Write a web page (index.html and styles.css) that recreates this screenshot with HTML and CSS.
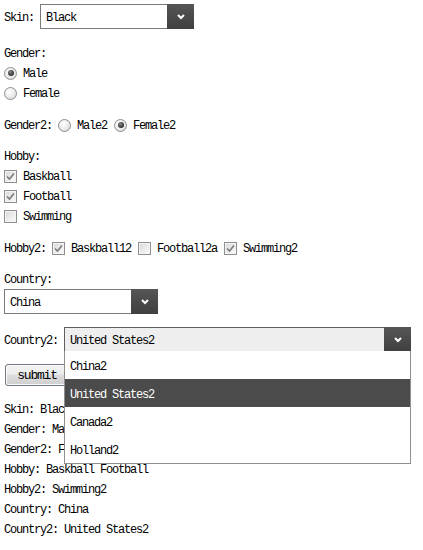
FILE: index.html
```html
<!DOCTYPE html>
<html>
<head>
<meta charset="utf-8">
<link rel="stylesheet" href="styles.css">
</head>
<body>
<form class="form">
  <div class="row row-skin">
    <span class="lbl">Skin:</span>
    <div class="select select-skin"><span class="val">Black</span><span class="arrow"><svg width="8" height="6" viewBox="0 0 8 6"><polyline points="1,1 4,4 7,1" fill="none" stroke="#fff" stroke-width="2"/></svg></span></div>
  </div>

  <div class="line mt14">Gender:</div>
  <div class="line"><span class="radio checked"></span><span class="txt">Male</span></div>
  <div class="line"><span class="radio"></span><span class="txt">Female</span></div>

  <div class="line mt12"><span class="lbl">Gender2:</span><span class="radio"></span><span class="txt item">Male2</span><span class="radio checked"></span><span class="txt">Female2</span></div>

  <div class="line mt11">Hobby:</div>
  <div class="line"><span class="check on"><svg width="11" height="11" viewBox="0 0 11 11"><polyline points="2,5.5 4.5,8 9,2.5" fill="none" stroke="#7a7a7a" stroke-width="1.6"/></svg></span><span class="txt">Baskball</span></div>
  <div class="line"><span class="check on"><svg width="11" height="11" viewBox="0 0 11 11"><polyline points="2,5.5 4.5,8 9,2.5" fill="none" stroke="#7a7a7a" stroke-width="1.6"/></svg></span><span class="txt">Football</span></div>
  <div class="line"><span class="check"></span><span class="txt">Swimming</span></div>

  <div class="line mt12"><span class="lbl">Hobby2:</span><span class="check on"><svg width="11" height="11" viewBox="0 0 11 11"><polyline points="2,5.5 4.5,8 9,2.5" fill="none" stroke="#7a7a7a" stroke-width="1.6"/></svg></span><span class="txt item">Baskball12</span><span class="check"></span><span class="txt item">Football2a</span><span class="check on"><svg width="11" height="11" viewBox="0 0 11 11"><polyline points="2,5.5 4.5,8 9,2.5" fill="none" stroke="#7a7a7a" stroke-width="1.6"/></svg></span><span class="txt">Swimming2</span></div>

  <div class="line mt11">Country:</div>
  <div class="row">
    <div class="select select-country"><span class="val">China</span><span class="arrow"><svg width="8" height="6" viewBox="0 0 8 6"><polyline points="1,1 4,4 7,1" fill="none" stroke="#fff" stroke-width="2"/></svg></span></div>
  </div>

  <div class="row mt13">
    <span class="lbl lbl-c2">Country2:</span>
    <div class="select select-country2 open"><span class="val">United States2</span><span class="arrow"><svg width="8" height="6" viewBox="0 0 8 6"><polyline points="1,1 4,4 7,1" fill="none" stroke="#fff" stroke-width="2"/></svg></span>
      <ul class="dropdown">
        <li class="opt">China2</li>
        <li class="opt selected">United States2</li>
        <li class="opt">Canada2</li>
        <li class="opt">Holland2</li>
      </ul>
    </div>
  </div>

  <button type="button" class="submit">submit</button>

  <div class="results">
    <div class="line">Skin: Black</div>
    <div class="line">Gender: Male</div>
    <div class="line">Gender2: Female2</div>
    <div class="line">Hobby: Baskball Football</div>
    <div class="line">Hobby2: Swimming2</div>
    <div class="line">Country: China</div>
    <div class="line">Country2: United States2</div>
  </div>
</form>
</body>
</html>
```

FILE: styles.css
```css
html, body {
  margin: 0;
  padding: 0;
  background: #fff;
}
body {
  font-family: "Liberation Mono", "DejaVu Sans Mono", monospace;
  font-size: 12px;
  letter-spacing: -1.2px;
  color: #000;
}
.form {
  padding: 4px 0 0 4px;
  margin: 0;
}
.row {
  display: flex;
  align-items: center;
  height: 25px;
}
.row .lbl { padding-top: 2px; }
.line {
  box-sizing: border-box;
  display: flex;
  align-items: center;
  height: 20px;
  padding-top: 2px;
  white-space: pre;
}
.mt11 { margin-top: 11px; }
.mt12 { margin-top: 12px; }
.mt13 { margin-top: 13px; }
.mt14 { margin-top: 14px; }

.lbl {
  margin-right: 6px;
  white-space: pre;
}
.txt { white-space: pre; }
.item { margin-right: 7px; }

/* radio */
.radio {
  box-sizing: border-box;
  width: 13px;
  height: 13px;
  border-radius: 50%;
  border: 1px solid #8e8e8e;
  background: radial-gradient(circle at 40% 35%, #ffffff 0%, #f0f0f0 40%, #d2d2d2 100%);
  margin: -2px 6px 0 0;
  position: relative;
  flex: none;
}
.radio.checked::after {
  content: "";
  position: absolute;
  left: 2.5px;
  top: 2.5px;
  width: 6px;
  height: 6px;
  border-radius: 50%;
  background: radial-gradient(circle at 40% 35%, #8a8a8a 0%, #3a3a3a 60%, #222 100%);
}

/* checkbox */
.check {
  box-sizing: border-box;
  width: 13px;
  height: 13px;
  border: 1px solid #8e8f8f;
  background: linear-gradient(135deg, #d8d8d8 0%, #ececec 55%, #fafafa 100%);
  box-shadow: inset 0 0 0 1px #f4f4f4;
  margin: -2px 6px 0 0;
  flex: none;
  display: flex;
  align-items: center;
  justify-content: center;
}
.check svg { display: block; }

/* selects */
.select {
  box-sizing: border-box;
  height: 25px;
  border: 1px solid #7b7b7b;
  background: #fff;
  display: flex;
  align-items: center;
  position: relative;
}
.select .val {
  flex: 1;
  padding: 2px 0 0 5px;
  white-space: pre;
}
.select .arrow {
  width: 27px;
  align-self: stretch;
  margin: -1px -1px -1px 0;
  background: linear-gradient(#565656, #3f3f3f);
  display: flex;
  align-items: center;
  justify-content: center;
}
.select .arrow svg { display: block; }
.select-skin { width: 154px; }
.select-country { width: 154px; }
.select-country2 {
  width: 347px;
  background: #eeeeee;
  border-color: #5e5e5e;
}

.dropdown {
  position: absolute;
  top: 100%;
  left: -1px;
  right: -1px;
  margin: 0;
  padding: 0;
  list-style: none;
  background: #fff;
  border: 1px solid #8f8f8f;
  border-top: none;
  z-index: 5;
}
.opt {
  box-sizing: border-box;
  height: 28px;
  line-height: 28px;
  padding: 2px 0 0 5px;
  white-space: pre;
}
.opt.selected {
  background: #4b4b4b;
  color: #fff;
}

/* submit */
.submit {
  display: block;
  box-sizing: border-box;
  margin: 12px 0 0 1px;
  width: 64px;
  height: 22px;
  padding: 1px 0 0;
  border: 1px solid #6f7780;
  border-radius: 3px;
  background: linear-gradient(#f4f4f4 0%, #ececec 45%, #dddddd 50%, #cfcfcf 100%);
  box-shadow: inset 0 0 0 1px #fbfbfb;
  font-family: "Liberation Mono", "DejaVu Sans Mono", monospace;
  font-size: 13px;
  letter-spacing: -1.2px;
  color: #000;
}

.results { margin-top: 13px; }
```
